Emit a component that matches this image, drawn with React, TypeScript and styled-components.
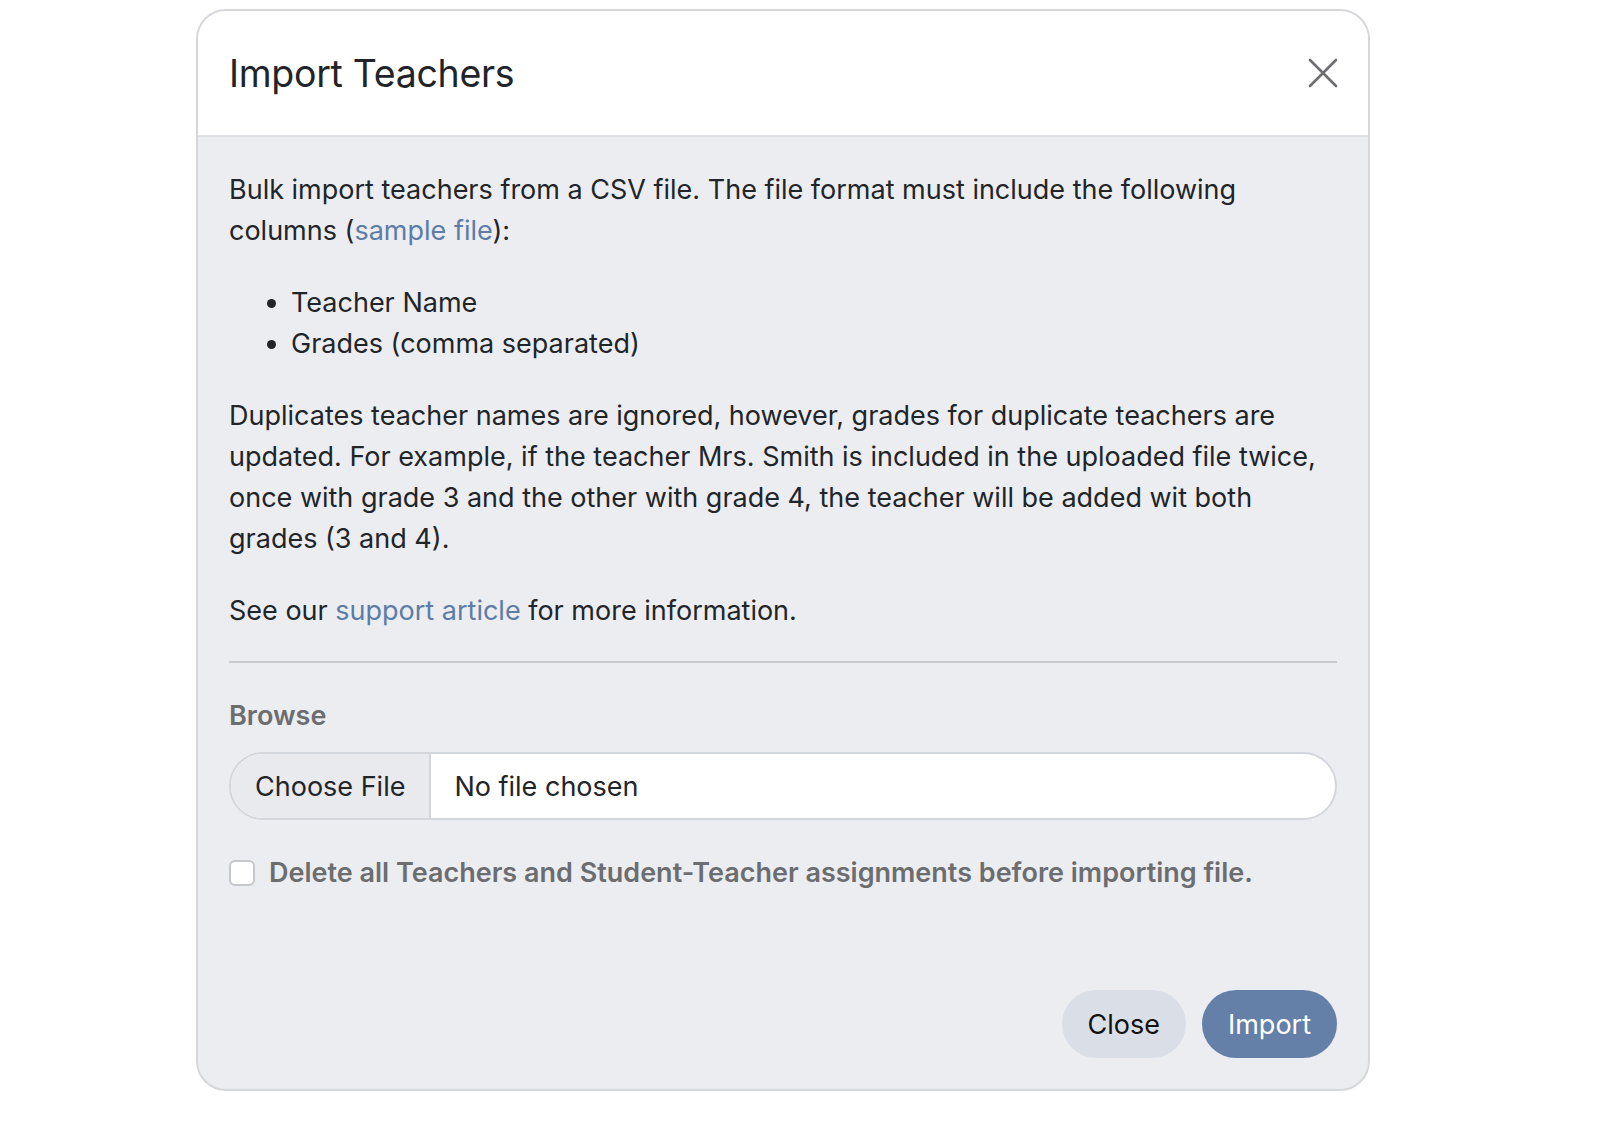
import React from "react";
import styled, { createGlobalStyle } from "styled-components";

const Global = createGlobalStyle`
  body { margin: 0; background: #fff; font-family: Inter, "Noto Sans", sans-serif; color: #212529; }
`;
const Page = styled.div`display: flex; justify-content: flex-start; padding: 9px 0 0 196px;`;
const Modal = styled.div`
  width: 1174px; height: 1082px; box-sizing: border-box; border: 2px solid #d6d7db;
  border-radius: 30px; overflow: hidden; background: #ecedf1; display: flex; flex-direction: column;
`;
const Header = styled.div`
  background: #fff; height: 126px; box-sizing: border-box; border-bottom: 2px solid #dee0e4;
  display: flex; align-items: center; justify-content: space-between; padding: 0 30px 0 31px;
`;
const Title = styled.h1`margin: 0; font-size: 37.5px; font-weight: 400; color: #212529; letter-spacing: -0.3px;`;
const CloseX = styled.button`border: 0; background: none; padding: 0; width: 30px; height: 30px; cursor: pointer;`;
const Body = styled.div`padding: 32px 31px 0 31px; font-size: 27px; line-height: 41px; flex: 1; display: flex; flex-direction: column;`;
const P = styled.p`margin: 0 0 31px;`;
const A = styled.a`color: #5d7ca6; text-decoration: none;`;
const List = styled.ul`margin: 0 0 31px; padding-left: 62px;`;
const Hr = styled.hr`border: 0; border-top: 2px solid #c9cacd; margin: 30px 0 32px;`;
const Label = styled.div`font-weight: 600; color: #6c6d70; margin-bottom: 16px;`;
const FileInput = styled.div`
  display: flex; height: 68px; box-sizing: border-box; border: 2px solid #d3d6da; border-radius: 34px;
  overflow: hidden; background: #fff;
`;
const FileBtn = styled.div`
  background: #e9eaee; border-right: 2px solid #d3d6da; padding: 0 24px; display: flex; align-items: center;
`;
const FileText = styled.div`display: flex; align-items: center; padding-left: 23px;`;
const CheckRow = styled.label`display: flex; align-items: center; gap: 14px; margin-top: 32px; font-weight: 600; color: #6c6d70;`;
const Box = styled.span`width: 26px; height: 26px; box-sizing: border-box; border: 2px solid #c5c7cb; border-radius: 6px; background: #fff;`;
const Footer = styled.div`display: flex; justify-content: flex-end; gap: 16px; margin-top: auto; padding-bottom: 31px;`;
const Btn = styled.button<{ $primary?: boolean }>`
  height: 68px; border: 0; border-radius: 34px; padding: 0 26px; font: inherit; font-size: 27px;
  background: ${p => (p.$primary ? "#6580a8" : "#dadee7")}; color: ${p => (p.$primary ? "#fff" : "#111")};
`;

export default function App() {
  return (
    <>
      <Global />
      <Page>
        <Modal>
          <Header>
            <Title>Import Teachers</Title>
            <CloseX aria-label="close">
              <svg width="30" height="30" viewBox="0 0 30 30"><path d="M2 2L28 28M28 2L2 28" stroke="#6d6e72" strokeWidth="2.6" strokeLinecap="round" /></svg>
            </CloseX>
          </Header>
          <Body>
            <P>Bulk import teachers from a CSV file. The file format must include the following columns (<A href="#">sample file</A>):</P>
            <List>
              <li>Teacher Name</li>
              <li>Grades (comma separated)</li>
            </List>
            <P>Duplicates teacher names are ignored, however, grades for duplicate teachers are updated. For example, if the teacher Mrs. Smith is included in the uploaded file twice, once with grade 3 and the other with grade 4, the teacher will be added wit both grades (3 and 4).</P>
            <P style={{ marginBottom: 0 }}>See our <A href="#">support article</A> for more information.</P>
            <Hr />
            <Label>Browse</Label>
            <FileInput>
              <FileBtn>Choose File</FileBtn>
              <FileText>No file chosen</FileText>
            </FileInput>
            <CheckRow><Box />Delete all Teachers and Student-Teacher assignments before importing file.</CheckRow>
            <Footer>
              <Btn>Close</Btn>
              <Btn $primary>Import</Btn>
            </Footer>
          </Body>
        </Modal>
      </Page>
    </>
  );
}
